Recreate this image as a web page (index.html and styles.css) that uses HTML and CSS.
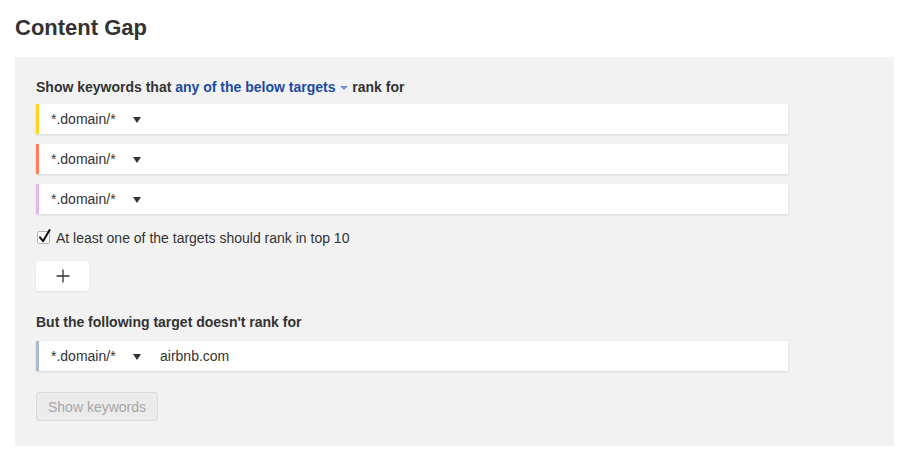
FILE: index.html
```html
<!DOCTYPE html>
<html lang="en">
<head>
    <meta charset="UTF-8">
    <meta name="viewport" content="width=device-width, initial-scale=1.0">
    <title>Content Gap</title>
    <link rel="stylesheet" href="styles.css">
</head>
<body>
    <h1 class="page-title">Content Gap</h1>
    <div class="panel">
        <div class="label">
            Show keywords that
            <span class="mode">any of the below targets <span class="mode-caret"></span></span>
            rank for
        </div>
        <div class="target target-yellow">
            <span class="scope">*.domain/*</span><span class="caret"></span>
        </div>
        <div class="target target-orange">
            <span class="scope">*.domain/*</span><span class="caret"></span>
        </div>
        <div class="target target-lilac">
            <span class="scope">*.domain/*</span><span class="caret"></span>
        </div>
        <label class="check">
            <svg class="check-box" width="16" height="16" viewBox="0 0 16 16">
                <rect x="0.5" y="3.5" width="12" height="12" rx="1.5" fill="#fff" stroke="#b5b5b5"/>
                <path d="M3 9.4 L6 13.2 L12.6 2" fill="none" stroke="#111" stroke-width="2" stroke-linecap="round" stroke-linejoin="round"/>
            </svg>
            At least one of the targets should rank in top 10
        </label>
        <button class="add-btn" type="button">
            <svg width="16" height="16" viewBox="0 0 16 16">
                <path d="M8 1.5 V14.5 M1.5 8 H14.5" stroke="#333" stroke-width="1.3"/>
            </svg>
        </button>
        <div class="label label-second">But the following target doesn't rank for</div>
        <div class="target target-gray">
            <span class="scope">*.domain/*</span><span class="caret"></span>
            <span class="domain">airbnb.com</span>
        </div>
        <button class="submit-btn" type="button" disabled>Show keywords</button>
    </div>
</body>
</html>
```

FILE: styles.css
```css
body {
    margin: 0;
    padding: 15px 19px 0 15px;
    font-family: "Liberation Sans", Arial, Helvetica, sans-serif;
    color: #333;
    background-color: #fff;
}
.page-title {
    margin: 0 0 16px 0;
    font-size: 22px;
    line-height: 26px;
    font-weight: bold;
    color: #333;
}
.panel {
    background-color: #f2f2f2;
    padding: 20px 21px 25px 21px;
    height: 344px;
    box-sizing: content-box;
}
.label {
    font-size: 14px;
    line-height: 20px;
    font-weight: bold;
    color: #333;
    margin-bottom: 7px;
}
.label-second {
    margin-top: 21px;
    margin-bottom: 9px;
}
.mode {
    color: #1a4aa3;
}
.mode-caret {
    display: inline-block;
    width: 0;
    height: 0;
    border-left: 4px solid transparent;
    border-right: 4px solid transparent;
    border-top: 4px solid #6b8fd0;
    vertical-align: middle;
    margin-left: 1px;
}
.target {
    display: flex;
    align-items: center;
    width: 749px;
    height: 30px;
    background-color: #fff;
    border-left: 3px solid #ccc;
    box-shadow: 0 1px 2px rgba(0, 0, 0, 0.12);
    margin-bottom: 10px;
    font-size: 14px;
    color: #333;
}
.target-yellow { border-left-color: #ffd520; }
.target-orange { border-left-color: #ff7e5d; }
.target-lilac { border-left-color: #e5b8e7; }
.target-gray { border-left-color: #a9bccb; margin-bottom: 0; }
.scope {
    padding-left: 12px;
    width: 82px;
}
.caret {
    width: 0;
    height: 0;
    margin-top: 1px;
    border-left: 4px solid transparent;
    border-right: 4px solid transparent;
    border-top: 6px solid #333;
}
.domain {
    margin-left: 19px;
}
.check {
    display: flex;
    align-items: center;
    margin-top: 14px;
    margin-left: 1px;
    font-size: 14px;
    line-height: 20px;
    color: #333;
}
.check-box {
    margin-right: 3px;
    margin-top: -4px;
}
.add-btn {
    display: flex;
    align-items: center;
    justify-content: center;
    margin-top: 13px;
    width: 53px;
    height: 30px;
    padding: 0;
    border: none;
    border-radius: 3px;
    background-color: #fff;
    box-shadow: 0 1px 2px rgba(0, 0, 0, 0.08);
}
.submit-btn {
    margin-top: 21px;
    width: 122px;
    height: 29px;
    padding: 0;
    border: 1px solid #dadada;
    border-radius: 3px;
    background-color: #ebebeb;
    color: #a6a6a6;
    font-family: "Liberation Sans", Arial, Helvetica, sans-serif;
    font-size: 14px;
}
```
